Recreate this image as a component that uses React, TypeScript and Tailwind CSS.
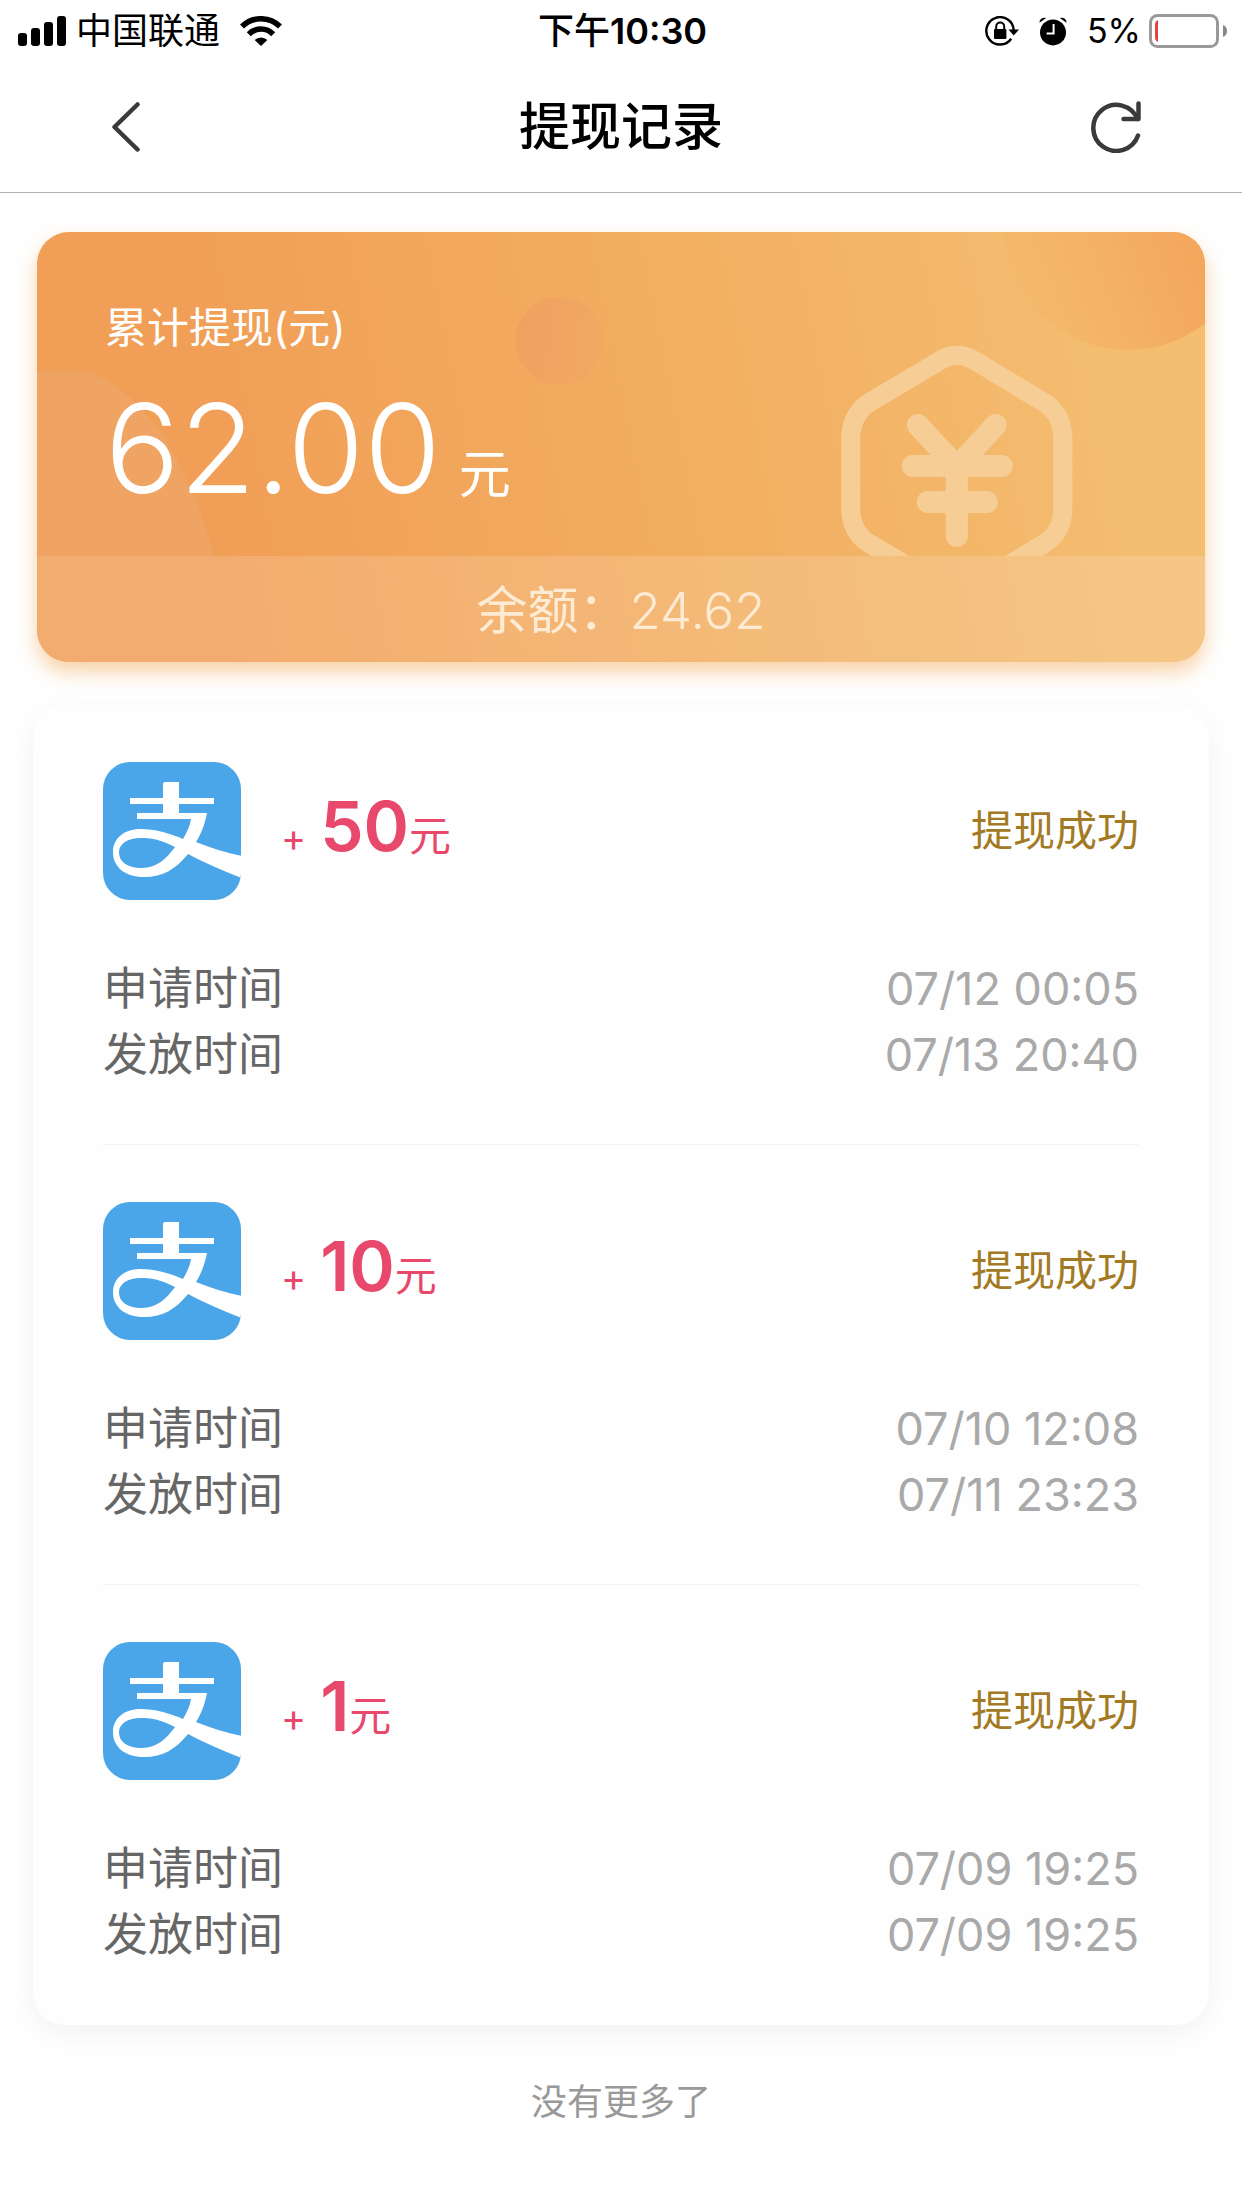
import { useState } from "react";

type RecordItem = {
  id: number;
  amount: string;
  status: string;
  applyTime: string;
  payTime: string;
};

const records: RecordItem[] = [
  { id: 1, amount: "50", status: "提现成功", applyTime: "07/12 00:05", payTime: "07/13 20:40" },
  { id: 2, amount: "10", status: "提现成功", applyTime: "07/10 12:08", payTime: "07/11 23:23" },
  { id: 3, amount: "1", status: "提现成功", applyTime: "07/09 19:25", payTime: "07/09 19:25" },
];

function SignalIcon() {
  return (
    <svg width="48" height="30" viewBox="0 0 48 30" aria-hidden="true">
      <rect x="0" y="17" width="9" height="13" rx="3" />
      <rect x="13" y="12" width="9" height="18" rx="3" />
      <rect x="26" y="6" width="9" height="24" rx="3" />
      <rect x="39" y="0" width="9" height="30" rx="3" />
    </svg>
  );
}

function WifiIcon() {
  return (
    <svg width="42" height="30" viewBox="0 0 42 30" aria-hidden="true">
      <g fill="none" stroke="#000" strokeWidth="5.6">
        <path d="M2 10.6 A27 27 0 0 1 40 10.6" />
        <path d="M8.8 18.2 A17 17 0 0 1 33.2 18.2" />
      </g>
      <path d="M14.6 24 A9.4 9.4 0 0 1 27.4 24 L21 30 Z" />
    </svg>
  );
}

function RotationLockIcon() {
  return (
    <svg width="34" height="30" viewBox="0 0 34 30" aria-hidden="true">
      <path d="M26.2 22.8 A13.7 13.7 0 1 1 28.7 14" fill="none" stroke="#000" strokeWidth="2.4" />
      <path d="M23.4 13.6 H34 L28.7 19.4 Z" />
      <rect x="9" y="13" width="12.4" height="10" rx="1" />
      <path d="M11.2 14 V10.6 A4 4 0 0 1 19.2 10.6 V14" fill="none" stroke="#000" strokeWidth="2" />
    </svg>
  );
}

function AlarmIcon() {
  return (
    <svg width="28" height="30" viewBox="0 0 28 30" aria-hidden="true">
      <circle cx="14" cy="16.4" r="13" />
      <path d="M0.4 6.8 A5 5 0 0 1 7.2 2 Z" />
      <path d="M27.6 6.8 A5 5 0 0 0 20.8 2 Z" />
      <path d="M14.6 8 V17.4 H7.6" fill="none" stroke="#fff" strokeWidth="2" />
    </svg>
  );
}

function BatteryIcon() {
  return (
    <svg width="78" height="34" viewBox="0 0 78 34" aria-hidden="true">
      <rect x="1.5" y="1.5" width="67" height="31" rx="7" fill="none" stroke="#999" strokeWidth="3" />
      <path d="M9 6 V28 Q6 27 6 23 V11 Q6 7 9 6 Z" fill="#e8403c" />
      <path d="M74 11 Q78 12.5 78 17 Q78 21.5 74 23 Z" fill="#888" />
    </svg>
  );
}

function AlipayIcon() {
  return (
    <svg className="size-[138px] shrink-0" viewBox="0 0 138 138" role="img" aria-label="支付宝">
      <defs>
        <clipPath id="alipay-tile">
          <rect width="138" height="138" rx="27" />
        </clipPath>
      </defs>
      <g clipPath="url(#alipay-tile)">
        <rect width="138" height="138" fill="#4aa6e8" />
        <path
          fill="#fff"
          fillRule="evenodd"
          d="M60 22 Q60 20 62 20 H76 V36 H111 V42 H76 V51 H104 C102 62 98 72 93 80 C108 86 124 91 139 94 V116 C120 109 102 101 85 92 C73 107 60 115 41 115 C22 115 10 105 10 90 C10 76 22 67 37 67 C52 67 66 71 80 77 C84 70 87 64 88 57 H34 V51 H60 V42 H27 V36 H60 Z
             M72 85 C62 80 52 76 41 76 C26 75 16 81 16 90 C16 101 26 106 39 106 C54 106 64 96 72 85 Z"
        />
      </g>
    </svg>
  );
}

function StatusBar() {
  return (
    <div className="grid grid-cols-[1fr_auto_1fr] items-center h-[62px] pl-[18px] pr-[15px] text-[36px] leading-[36px]">
      <div className="flex items-center">
        <SignalIcon />
        <span className="ml-[10px] mr-5">中国联通</span>
        <WifiIcon />
      </div>
      <span className="font-medium">
        下午<span className="font-semibold">10:30</span>
      </span>
      <div className="flex items-center justify-end">
        <RotationLockIcon />
        <span className="ml-5 mr-5">
          <AlarmIcon />
        </span>
        <span className="text-[34px]">5%</span>
        <span className="ml-2">
          <BatteryIcon />
        </span>
      </div>
    </div>
  );
}

function NavBar({ onRefresh }: { onRefresh: () => void }) {
  return (
    <header className="flex items-center justify-between h-[131px] px-[100px] border-b border-[#b0b0b0]">
      <button type="button" aria-label="返回" className="flex w-[52px] h-16 items-center justify-center">
        <svg width="28" height="50" viewBox="0 0 28 50" fill="none" stroke="#3a3a3a" strokeWidth="4.5" strokeLinecap="round" strokeLinejoin="round">
          <path d="M25.5 2.5 L2.5 25 L25.5 47.5" />
        </svg>
      </button>
      <h1 className="text-[51px] leading-[60px] font-medium">提现记录</h1>
      <button type="button" aria-label="刷新" onClick={onRefresh} className="flex w-[52px] h-16 items-center justify-center">
        <svg width="50" height="52" viewBox="0 0 50 52" fill="none" stroke="#3a3a3a" strokeWidth="4.5" strokeLinecap="round" strokeLinejoin="round">
          <path d="M47 34.5 A23 23 0 1 1 46.5 18" />
          <path d="M47.5 2.5 V18 H32.5" />
        </svg>
      </button>
    </header>
  );
}

function BalanceCard() {
  return (
    <section className="relative overflow-hidden rounded-[32px] text-white">
      {/* Background shapes */}
      <svg className="absolute inset-0 size-full" viewBox="0 0 1167 430" preserveAspectRatio="xMaxYMid slice" aria-hidden="true">
        <defs>
          <linearGradient id="card-bg" gradientUnits="userSpaceOnUse" x1="150" y1="180" x2="1050" y2="0">
            <stop offset="0" stopColor="#f19e56" />
            <stop offset="0.5" stopColor="#f2ad60" />
            <stop offset="1" stopColor="#f4bd70" />
          </linearGradient>
          <linearGradient id="corner-ball" x1="0.05" y1="0.75" x2="0.9" y2="0.45">
            <stop offset="0" stopColor="#f3a259" stopOpacity="0.05" />
            <stop offset="1" stopColor="#f3a259" />
          </linearGradient>
          <linearGradient id="small-ball" x1="0" y1="0" x2="1" y2="0.2">
            <stop offset="0" stopColor="#f0a060" />
            <stop offset="1" stopColor="#f0a565" stopOpacity="0.5" />
          </linearGradient>
        </defs>
        <rect width="1167" height="430" fill="url(#card-bg)" />
        <path d="M0 139 H45 Q54 139 62 144 C110 170 145 215 177 324 H0 Z" fill="#eda568" fillOpacity="0.75" />
        <circle cx="522" cy="109" r="44" fill="url(#small-ball)" />
        <circle cx="1090" cy="-7" r="125" fill="url(#corner-ball)" />
        <g fill="none" stroke="#f7cd96" strokeLinecap="round" strokeLinejoin="round">
          <path
            strokeWidth="19"
            d="M900 130 L831 171 Q813 183 813 208 V275 Q813 300 831 311 L900 352 Q920 364 940 352 L1007 311 Q1025 300 1025 275 V208 Q1025 183 1007 171 L939 130 Q919 117 900 130 Z"
          />
          <path strokeWidth="22" d="M880 193 L919 235 L958 193 M919 235 V304 M875 234 H964 M890 270 H949" />
        </g>
        <rect y="324" width="1167" height="106" fill="url(#card-bg)" />
      </svg>
      <div className="relative px-[68px] pt-[66px] pb-[46px]">
        <p className="text-[42px] leading-[60px]">累计提现(元)</p>
        <p className="mt-7 flex items-baseline gap-[18px]">
          <span className="text-[124px] leading-[124px] font-light">62.00</span>
          <span className="text-[52px] leading-[52px]">元</span>
        </p>
      </div>
      <p className="relative bg-white/15 pt-1 text-center text-[51px] leading-[102px] text-[#fdebd3]">
        余额：<span className="font-light">24.62</span>
      </p>
    </section>
  );
}

function RecordRow({ item }: { item: RecordItem }) {
  return (
    <li className="pt-[57px] pb-14 border-b border-[#f3f3f3] last:border-transparent">
      <div className="flex items-center">
        <AlipayIcon />
        <p className="ml-10 flex items-baseline text-[42px] leading-[70px] text-[#e8486c]">
          <span className="mr-[14px] text-[38px]">+</span>
          <span className="text-[69px] font-semibold">{item.amount}</span>
          <span>元</span>
        </p>
        <span className="ml-auto text-[42px] leading-[60px] text-[#a37a24]">{item.status}</span>
      </div>
      <dl className="mt-14 text-[45px] leading-[66px]">
        <div className="flex justify-between">
          <dt className="text-[#666]">申请时间</dt>
          <dd className="text-[#a9a9a9]">{item.applyTime}</dd>
        </div>
        <div className="flex justify-between">
          <dt className="text-[#666]">发放时间</dt>
          <dd className="text-[#a9a9a9]">{item.payTime}</dd>
        </div>
      </dl>
    </li>
  );
}

export default function App() {
  const [items, setItems] = useState(records);

  return (
    <div className="min-h-screen bg-white text-black font-['Inter','Noto_Sans_CJK_SC',sans-serif]">
      <StatusBar />
      <NavBar onRefresh={() => setItems([...records])} />
      <main>
        <div className="mx-[37px] mt-[39px] rounded-[32px] shadow-[0_10px_20px_rgba(242,165,80,0.5)]">
          <BalanceCard />
        </div>
        <ul className="mx-[33px] mt-[43px] px-[70px] rounded-[32px] bg-[#fefefe] shadow-[0_8px_32px_rgba(0,0,0,0.06)]">
          {items.map((item) => (
            <RecordRow key={item.id} item={item} />
          ))}
        </ul>
        <p className="mt-12 text-center text-[36px] leading-[58px] text-[#999]">没有更多了</p>
      </main>
    </div>
  );
}
